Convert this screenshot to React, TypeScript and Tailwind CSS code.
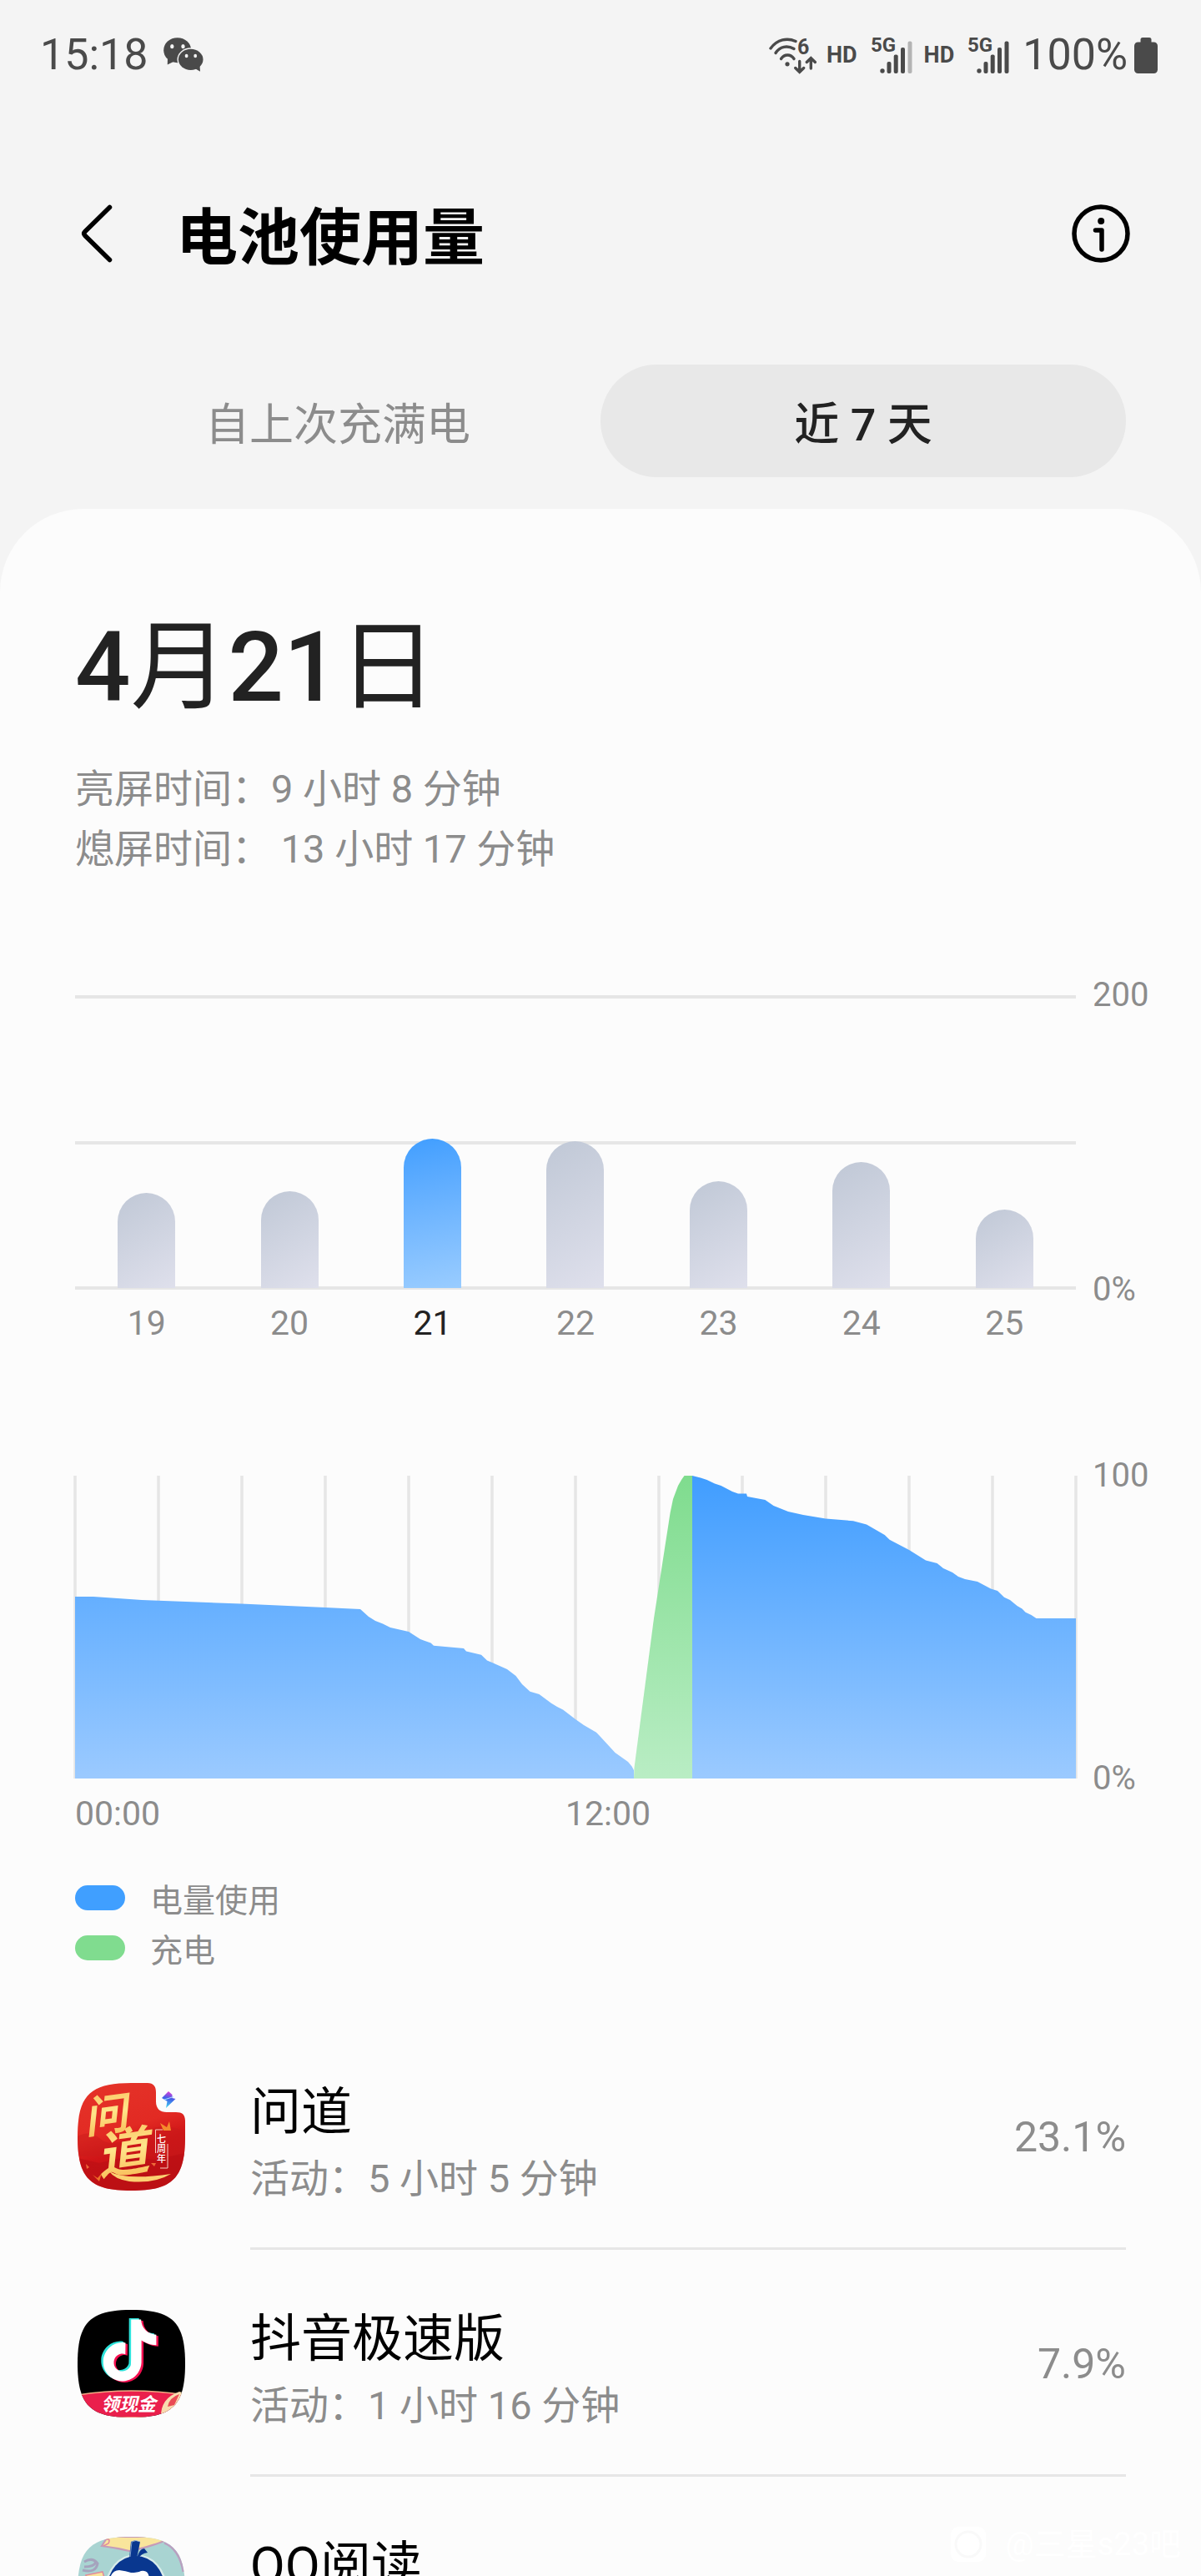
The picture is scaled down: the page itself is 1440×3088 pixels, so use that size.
import { useState } from "react";
import type { ReactNode } from "react";

const SQUIRCLE =
  "M64.5 0C114 0 129 15 129 64.5S114 129 64.5 129 0 114 0 64.5 15 0 64.5 0Z";

const NOTE =
  "M12.525.02c1.31-.02 2.61-.01 3.91-.02.08 1.53.63 3.09 1.75 4.17 1.12 1.11 2.7 1.62 4.24 1.79v4.03c-1.44-.05-2.89-.35-4.2-.97-.57-.26-1.1-.59-1.62-.93-.01 2.92.01 5.84-.02 8.75-.08 1.4-.54 2.79-1.35 3.94-1.31 1.92-3.58 3.17-5.91 3.21-1.43.08-2.86-.31-4.08-1.03-2.02-1.19-3.44-3.37-3.65-5.71-.02-.5-.03-1-.01-1.49.18-1.9 1.12-3.72 2.58-4.96 1.66-1.44 3.98-2.13 6.15-1.72.02 1.48-.04 2.96-.04 4.44-.99-.32-2.15-.23-3.02.37-.63.41-1.11 1.04-1.36 1.75-.21.51-.15 1.07-.14 1.61.24 1.64 1.82 3.02 3.5 2.87 1.12-.01 2.19-.66 2.77-1.61.19-.33.4-.67.41-1.06.1-1.79.06-3.57.07-5.36.01-4.03-.01-8.05.02-12.07z";

const DRAIN_BEFORE =
  "0,145 22,145 80,149 199,153.5 300,158 342,160 352,169 360,174 369,177.5 378,182 400,187 414,196 426.5,200.5 430,203.7 466,207 469,210.6 487,214.7 494,221.6 500,224 518,232 528.5,240 536,250 545.5,258.8 556.5,262 571,272.7 578,277 585,280.4 600,292 610,299 625,307.8 630,313 647.5,332 663,343 667.6,348.6 670,353 670,363 0,363";
const CHARGE =
  "670,363 670.5,350 694,171 706,93.5 713.6,44.5 717,28 723,12 727,5 730.5,0 740,0 740,363";
const DRAIN_AFTER =
  "740,0 750,2.5 757.6,5 767,9.4 774.6,12 788,19 795,21.6 805,21.6 806,25 827.4,29 837.5,36 855,43 873,47 900,51.4 933,54.3 949,58.4 970.7,71 976.6,76.7 1000,89 1020,101.6 1033.6,105 1041,111 1052,116 1059,121 1067,124 1082,127 1098,135.5 1106,138 1114,145.7 1121,149 1129.5,156 1135.5,159.6 1139.6,163.7 1146.5,167 1152.5,171 1200,171 1200,363 740,363";

const DAYS = [
  { day: "19", height: 114 },
  { day: "20", height: 116 },
  { day: "21", height: 179 },
  { day: "22", height: 176 },
  { day: "23", height: 128 },
  { day: "24", height: 151 },
  { day: "25", height: 94 },
];

const HOUR_LINES = [0, 100, 200, 300, 400, 500, 600, 700, 800, 900, 1000, 1100, 1200];

function WeChatIcon() {
  return (
    <svg width="49" height="42" viewBox="0 0 49 42" fill="#4a4a4a" aria-label="微信">
      <path d="M5 24 4.800 32.500 14 28Z" />
      <ellipse cx="16.700" cy="15.200" rx="16.500" ry="15" />
      <ellipse cx="32.700" cy="26.300" rx="16.200" ry="14" fill="#f4f4f4" />
      <ellipse cx="32.700" cy="26.300" rx="14.800" ry="12.600" />
      <path d="M36 36 44 40.800 43.500 33Z" />
      <g fill="#f4f4f4">
        <ellipse cx="10.300" cy="10.700" rx="2.200" ry="2.600" />
        <ellipse cx="23.500" cy="10.700" rx="2.200" ry="2.600" />
        <ellipse cx="27.600" cy="22" rx="1.900" ry="2.200" />
        <ellipse cx="38.200" cy="22" rx="1.900" ry="2.200" />
      </g>
    </svg>
  );
}

function WifiIcon() {
  return (
    <svg width="57" height="65" viewBox="0 -10 57 65" fill="none" stroke="#4a4a4a" strokeWidth="3.400" strokeLinecap="round" aria-label="Wi-Fi 6">
      <path d="M2 14C10 3 22 1 32 5.500" />
      <path d="M8 19.500C13 11.500 22 10 30 14.500" />
      <path d="M14.500 26.500C18.500 20.500 26 20.500 30 26.500" />
      <circle cx="22" cy="32.800" r="2.600" fill="#4a4a4a" stroke="none" />
      <path d="M36.700 29.500V42M31.700 37.500 36.700 42.300 41.700 37.500" />
      <path d="M50.300 38V26.500M45.300 30.500 50.300 25.700 55.300 30.500" />
      <text x="34" y="20.500" fontSize="25" fontWeight="700" fill="#4a4a4a" stroke="none">6</text>
    </svg>
  );
}

function SignalIcon({ full }: { full: boolean }) {
  return (
    <svg width="52" height="64" viewBox="0 -10 52 64" fill="#4a4a4a" aria-label="5G 信号">
      <text x="0" y="17.500" fontSize="24" fontWeight="700">5G</text>
      <circle cx="14" cy="41" r="2.700" />
      <rect x="19.500" y="30" width="5" height="14" rx="2" />
      <rect x="27.700" y="21.500" width="5" height="22.500" rx="2" />
      <rect x="36" y="13" width="5" height="31" rx="2" />
      <rect x="44.500" y="5.500" width="5" height="38.500" rx="2" fill={full ? "#4a4a4a" : "#b4b4b4"} />
    </svg>
  );
}

function WendaoIcon() {
  return (
    <svg width="129" height="129" viewBox="0 0 129 129" aria-hidden="true">
      <defs>
        <linearGradient id="wdRed" x1="0" y1="0" x2="0.300" y2="1">
          <stop offset="0" stopColor="#e5342a" />
          <stop offset="0.500" stopColor="#e22a23" />
          <stop offset="0.700" stopColor="#cf1417" />
          <stop offset="1" stopColor="#c01216" />
        </linearGradient>
        <linearGradient id="wdGold" x1="0" y1="0" x2="0" y2="1">
          <stop offset="0" stopColor="#f9b856" />
          <stop offset="0.500" stopColor="#ffe58a" />
          <stop offset="1" stopColor="#f7b24c" />
        </linearGradient>
        <linearGradient id="wdBolt" x1="0.600" y1="0" x2="0.400" y2="1">
          <stop offset="0" stopColor="#e33ad8" />
          <stop offset="0.450" stopColor="#3f62e8" />
          <stop offset="1" stopColor="#45d8f0" />
        </linearGradient>
        <clipPath id="wdClip">
          <path d="M64.500 0H84C91 0 94 4 94 11V22C94 31 99 35 107 35H118C126 35 129 38 129 46V64.500C129 114 114 129 64.500 129S0 114 0 64.500 15 0 64.500 0Z" />
        </clipPath>
      </defs>
      <g clipPath="url(#wdClip)">
        <rect width="129" height="129" fill="url(#wdRed)" />
        <path d="M0 64Q14 56 26 66T52 70 80 58 104 52 129 58V88H0Z" fill="#c81a1b" opacity="0.450" />
        <path d="M0 90 26 96 60 88 92 92 129 84V129H0Z" fill="#b80f14" opacity="0.550" />
        <g fill="url(#wdGold)" fontFamily="'Noto Sans CJK SC'" fontWeight="700" fontStyle="italic">
          <text x="7" y="57" fontSize="52" transform="rotate(-8 36 36)">问</text>
          <text x="23" y="106" fontSize="62" transform="rotate(-8 55 84)">道</text>
        </g>
        <path d="M38 106Q58 117 112 109 92 121 62 118 44 115 38 106Z" fill="#fcd071" />
        <path d="M99 48 107 53 110 46 112 57 103 57Z" fill="#f58a2c" />
        <path d="M18 110 24 114 29 108 26 118Z" fill="#f0702a" />
        <path d="M10 97 14 101 11 103ZM88 96 92 100 94 96Z" fill="#ee6a3a" />
        <path d="M102 56H93.500V84M99 102H108V73" fill="none" stroke="#f7cdbd" strokeWidth="1" />
        <g fill="#fff" fontFamily="'Noto Sans CJK SC'" fontSize="11" fontWeight="500">
          <text x="95" y="71">七</text>
          <text x="95" y="83">周</text>
          <text x="95" y="95">年</text>
        </g>
      </g>
      <path d="M109 10 113.500 14V18L117.500 19 106 30 107.500 22 101 18Z" fill="url(#wdBolt)" />
      <path d="M104 20 115 16.500" stroke="#a9dcff" strokeWidth="1" />
    </svg>
  );
}

function DouyinIcon() {
  return (
    <svg width="129" height="129" viewBox="0 0 129 129" aria-hidden="true">
      <defs>
        <clipPath id="dyClip">
          <path d={SQUIRCLE} />
        </clipPath>
      </defs>
      <g clipPath="url(#dyClip)">
        <rect width="129" height="129" fill="#000" />
        <g transform="translate(23.500 10) scale(3.050 3.080)">
          <path d={NOTE} fill="#2de2da" />
        </g>
        <g transform="translate(28.500 13) scale(3.050 3.080)">
          <path d={NOTE} fill="#f50f50" />
        </g>
        <g transform="translate(26 11.500) scale(3.050 3.080)">
          <path d={NOTE} fill="#fff" />
        </g>
        <path d="M0 102Q64.500 92 129 102V129H0Z" fill="#ea1f4c" stroke="#f2ab83" strokeWidth="1.600" />
        <path d="M100 129Q99 106 122 98L129 100V129Z" fill="#f8dcae" />
        <path d="M108 116Q110 105 122 101L116 114Z" fill="#ea4a55" />
        <text x="28" y="121" fontSize="22" fontWeight="700" fontStyle="italic" fill="#fff" fontFamily="'Noto Sans CJK SC'">领现金</text>
      </g>
    </svg>
  );
}

function ReaderIcon() {
  return (
    <svg width="129" height="129" viewBox="0 0 129 129" aria-hidden="true">
      <defs>
        <clipPath id="rdClip">
          <path d={SQUIRCLE} />
        </clipPath>
      </defs>
      <g clipPath="url(#rdClip)">
        <rect width="129" height="129" fill="#a9d4d2" />
        <path d="M36 0 29 11Q46 13 62 17 84 13 104 5L100 0Z" fill="#f9e59c" stroke="#c59bb8" strokeWidth="2.200" />
        <path d="M34 3Q40 2 37 8L31 11" fill="none" stroke="#e08c9c" strokeWidth="1.600" />
        <path d="M104 7Q122 14 127 42" fill="none" stroke="#b9a0c0" strokeWidth="3" />
        <path d="M6 40Q22 44 24 32 18 24 8 30M8 36Q20 36 22 30" fill="none" stroke="#a5a3bd" strokeWidth="3" />
        <path d="M10 46 30 42 34 56 12 60Z" fill="#f9e59c" stroke="#e08c9c" strokeWidth="1.600" />
        <ellipse cx="70" cy="62" rx="37" ry="41" fill="#fff" opacity="0.550" />
        <ellipse cx="70" cy="62" rx="34.500" ry="39" fill="#09378f" />
        <path d="M62 26 64 6Q68 3 75 6L71 26Z" fill="#09378f" />
        <path d="M71 26Q74 14 80 14L84 19Q76 20 73 26Z" fill="#09378f" />
        <path d="M63 24 65 6Q70 3 75 6" fill="none" stroke="#9fb9dc" strokeWidth="0.800" />
        <path d="M38 54Q40 40 50 40 58 41 64 43 72 43 76 41 86 39 86 52V84H40Z" fill="#fff" />
      </g>
    </svg>
  );
}

function AxisLabels({ top, bottom }: { top: string; bottom: string }) {
  return (
    <div className="-my-6 flex w-[150px] shrink-0 flex-col justify-between pl-5 text-[40px] leading-[48px] text-[#8c8c8c]">
      <span>{top}</span>
      <span>{bottom}</span>
    </div>
  );
}

function AppRow({ icon, name, detail, percent }: { icon: ReactNode; name: string; detail?: string; percent?: string }) {
  return (
    <li className="flex h-[272px] shrink-0 items-center gap-[78px] pr-[90px] pl-[93px]">
      <span className="shrink-0">{icon}</span>
      <div className="flex h-full min-w-0 flex-1 items-center justify-between border-b-[3px] border-[#e6e6e6]">
        <div className="pt-5">
          <h2 className="text-[61px] leading-[84px] text-black">{name}</h2>
          <p className="h-[76px] text-[47px] leading-[76px] text-[#8c8c8c]">{detail}</p>
        </div>
        <span className="pt-1 text-[50px] leading-[60px] text-[#8c8c8c]">{percent}</span>
      </div>
    </li>
  );
}

export default function App() {
  const [tab, setTab] = useState(1);
  const tabs = ["自上次充满电", "近 7 天"];

  return (
    <div className="relative flex h-screen w-full flex-col overflow-hidden bg-[#f4f4f4] font-[Roboto,'Noto_Sans_CJK_SC',sans-serif]">
      <div className="flex h-[132px] shrink-0 items-center justify-between pr-[52px] pl-[48px] text-[52px] leading-[60px] text-[#4a4a4a]">
        <div className="flex items-center gap-[18px]">
          <span>15:18</span>
          <WeChatIcon />
        </div>
        <div className="flex items-center">
          <WifiIcon />
          <span className="ml-3 text-[27px] leading-8 font-bold">HD</span>
          <span className="ml-4">
            <SignalIcon full={false} />
          </span>
          <span className="ml-3 text-[27px] leading-8 font-bold">HD</span>
          <span className="ml-4">
            <SignalIcon full />
          </span>
          <span className="ml-[14px]">100%</span>
          <svg className="ml-2" width="28" height="43" viewBox="0 0 28 43" fill="#4a4a4a" aria-label="电池">
            <rect x="7.500" y="0" width="13" height="12" rx="2.500" />
            <rect x="0" y="5.500" width="28" height="37.500" rx="4.500" />
          </svg>
        </div>
      </div>

      <header className="flex h-[296px] shrink-0 items-center pr-[80px] pl-[92px]">
        <button type="button" aria-label="返回" className="shrink-0">
          <svg width="48" height="74" viewBox="0 0 48 74" fill="none" stroke="#000" strokeWidth="5.500" strokeLinecap="round" strokeLinejoin="round">
            <path d="M39.500 5.500 10 34.500Q7.500 37 10 39.500L39.500 68.500" />
          </svg>
        </button>
        <h1 className="ml-[71px] flex-1 pt-3 text-[74px] leading-[88px] font-bold text-black">电池使用量</h1>
        <button type="button" aria-label="信息" className="shrink-0">
          <svg width="80" height="80" viewBox="0 0 80 80" fill="none" stroke="#000" strokeWidth="5.500" strokeLinecap="round" strokeLinejoin="round">
            <circle cx="40" cy="40" r="32" />
            <circle cx="40.200" cy="25" r="4" fill="#000" stroke="none" />
            <path d="M33.500 36H41V59" />
          </svg>
        </button>
      </header>

      <div role="tablist" className="grid shrink-0 grid-cols-2 px-[90px] pt-[9px] pb-[38px]">
        {tabs.map((label, i) => (
          <button
            key={label}
            type="button"
            role="tab"
            aria-selected={tab === i}
            onClick={() => setTab(i)}
            className={
              tab === i
                ? "h-[135px] rounded-full bg-[#e8e8e8] pt-[10px] text-[54px] leading-[64px] font-medium text-[#222]"
                : "h-[135px] rounded-full pt-[10px] text-[53px] leading-[64px] text-[#8c8c8c]"
            }
          >
            {label}
          </button>
        ))}
      </div>

      <main className="flex min-h-0 flex-1 flex-col overflow-hidden rounded-t-[100px] bg-[#fcfcfc] pt-[130px]">
        <section className="shrink-0 px-[90px]">
          <h2 className="text-[117px] leading-[120px] font-medium text-[#222]">
            4<span className="font-normal">月</span>21<span className="font-normal">日</span>
          </h2>
          <div className="mt-[50px] text-[47px] leading-[72px] text-[#8c8c8c]">
            <p>亮屏时间：9 小时 8 分钟</p>
            <p>熄屏时间： 13 小时 17 分钟</p>
          </div>
        </section>

        <section aria-label="每日用量" className="mt-[139px] shrink-0 pl-[90px]">
          <div className="flex">
            <div className="grid h-[353px] flex-1">
              <div className="flex flex-col justify-between [grid-area:1/1]">
                <div className="h-1 bg-[#e6e6e6]" />
                <div className="h-1 bg-[#e6e6e6]" />
                <div className="h-1 bg-[#e6e6e6]" />
              </div>
              <div className="relative grid grid-cols-7 items-end justify-items-center pb-[2px] [grid-area:1/1]">
                {DAYS.map((d) => (
                  <div
                    key={d.day}
                    className={
                      d.day === "21"
                        ? "w-[69px] rounded-t-full bg-linear-170 from-[#409eff] to-[#99ccff]"
                        : "w-[69px] rounded-t-full bg-linear-150 from-[#c0c8d6] to-[#dfe0ec]"
                    }
                    style={{ height: d.height }}
                  />
                ))}
              </div>
            </div>
            <AxisLabels top="200" bottom="0%" />
          </div>
          <div className="mt-4 mr-[150px] grid grid-cols-7 text-center text-[41px] leading-[48px] text-[#8c8c8c]">
            {DAYS.map((d) => (
              <span key={d.day} className={d.day === "21" ? "text-[#222]" : ""}>
                {d.day}
              </span>
            ))}
          </div>
        </section>

        <section aria-label="电量曲线" className="mt-[159px] shrink-0 pl-[90px]">
          <div className="flex">
            <svg className="h-[363px] min-w-0 flex-1 overflow-visible" viewBox="0 0 1200 363" preserveAspectRatio="none">
              <defs>
                <linearGradient id="useFill" gradientUnits="userSpaceOnUse" x1="0" y1="0" x2="0" y2="363">
                  <stop offset="0" stopColor="#409dff" />
                  <stop offset="1" stopColor="#9bcaff" />
                </linearGradient>
                <linearGradient id="chargeFill" gradientUnits="userSpaceOnUse" x1="0" y1="0" x2="0" y2="363">
                  <stop offset="0" stopColor="#7fdc8e" />
                  <stop offset="1" stopColor="#b9edc4" />
                </linearGradient>
              </defs>
              {HOUR_LINES.map((x) => (
                <line key={x} x1={x} y1="0" x2={x} y2="363" stroke="#e6e6e6" strokeWidth="3.600" />
              ))}
              <polygon points={DRAIN_BEFORE} fill="url(#useFill)" />
              <polygon points={CHARGE} fill="url(#chargeFill)" />
              <polygon points={DRAIN_AFTER} fill="url(#useFill)" />
            </svg>
            <AxisLabels top="100" bottom="0%" />
          </div>
          <div className="mt-[18px] mr-[150px] flex text-[41px] leading-[48px] text-[#8c8c8c]">
            <span className="w-[49%]">00:00</span>
            <span>12:00</span>
          </div>
          <ul className="mt-[47px] text-[39px] leading-[60px] text-[#8c8c8c]">
            <li className="flex h-[60px] items-center gap-[30px]">
              <span className="h-[30px] w-[60px] rounded-full bg-[#409fff]" />
              <span className="pt-2">电量使用</span>
            </li>
            <li className="flex h-[60px] items-center gap-[30px]">
              <span className="h-[30px] w-[60px] rounded-full bg-[#80dc8f]" />
              <span className="pt-2">充电</span>
            </li>
          </ul>
        </section>

        <ul className="mt-[60px]">
          <AppRow icon={<WendaoIcon />} name="问道" detail="活动：5 小时 5 分钟" percent="23.1%" />
          <AppRow icon={<DouyinIcon />} name="抖音极速版" detail="活动：1 小时 16 分钟" percent="7.9%" />
          <AppRow icon={<ReaderIcon />} name="QQ阅读" />
        </ul>
      </main>

      <div className="absolute right-6 bottom-4 flex items-center gap-6 text-[38px] leading-[44px] text-white">
        <svg width="42" height="42" viewBox="0 0 42 42" aria-hidden="true">
          <rect width="42" height="42" rx="9" fill="#fff" />
          <circle cx="21" cy="21" r="15" fill="none" stroke="#f9f9f9" strokeWidth="3" />
        </svg>
        <span>@三星s23吧</span>
      </div>
    </div>
  );
}
